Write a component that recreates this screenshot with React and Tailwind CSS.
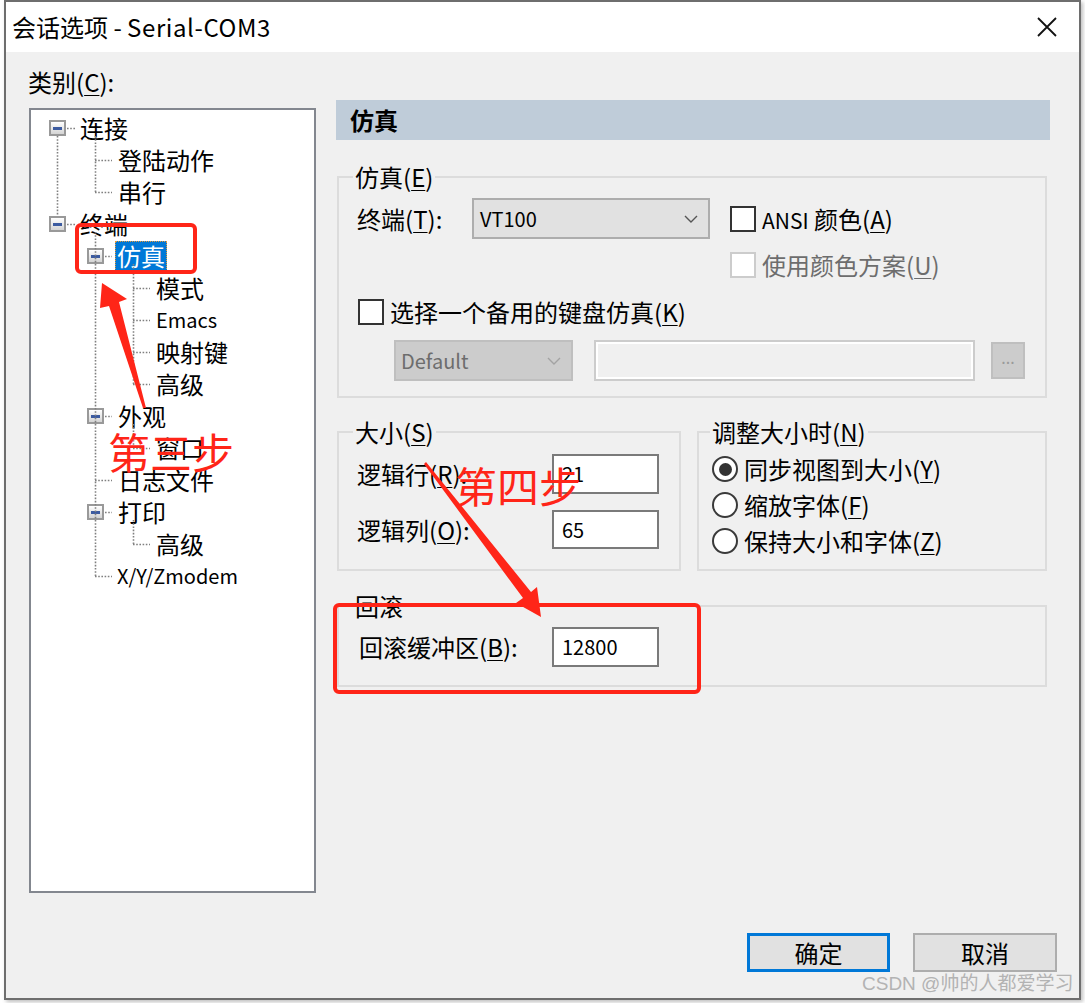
import React from "react";

// access-key letter, underlined like a Win32 label
const Key = ({ children }) => (
  <span className="underline decoration-1 underline-offset-[3px]">{children}</span>
);

const MinusBox = () => (
  <span className="flex h-[16px] w-[17px] shrink-0 items-center justify-center border-2 border-[#999999] bg-linear-to-b from-white to-[#d4d4d4]">
    <span className="h-[3px] w-[9px] bg-[#3c5ba0]" />
  </span>
);

const Check = ({ disabled }) => (
  <span
    className={
      disabled
        ? "block h-[26px] w-[26px] shrink-0 border-2 border-[#cccccc] bg-white"
        : "block h-[26px] w-[26px] shrink-0 border-2 border-[#333333] bg-white"
    }
  />
);

const Radio = ({ checked }) => (
  <span className="flex h-[26px] w-[26px] shrink-0 items-center justify-center rounded-full border-2 border-[#3a3a3a] bg-white">
    {checked && <span className="h-[13px] w-[13px] rounded-full bg-[#333333]" />}
  </span>
);

const Chevron = ({ color }) => (
  <svg width="14" height="8" viewBox="0 0 14 8">
    <path d="M1 1 L7 7 L13 1" fill="none" stroke={color} strokeWidth="1.4" />
  </svg>
);

const TreeRow = ({ pl, box, children }) => (
  <div className="flex h-[32px] items-center" style={{ paddingLeft: pl }}>
    {box && <MinusBox />}
    {children}
  </div>
);

// dotted connectors of the tree, coordinates local to the tree box
const TreeLines = () => {
  const v = [
    [26, 26, 106],
    [64, 26, 82],
    [64, 122, 466],
    [102, 154, 274],
    [102, 314, 338],
    [102, 410, 434],
  ];
  const h = [
    [18, 36, 45],
    [114, 36, 45],
    [50, 64, 81],
    [82, 64, 81],
    [146, 74, 81],
    [306, 74, 81],
    [370, 64, 81],
    [402, 74, 81],
    [466, 64, 81],
    [178, 102, 119],
    [210, 102, 119],
    [242, 102, 119],
    [274, 102, 119],
    [338, 102, 119],
    [434, 102, 119],
  ];
  return (
    <svg className="pointer-events-none absolute left-0 top-0" width="283" height="500">
      {v.map(([x, y1, y2], i) => (
        <line key={"v" + i} x1={x + 0.5} y1={y1} x2={x + 0.5} y2={y2} stroke="#808080" strokeWidth="1.6" strokeDasharray="1.6 1.6" />
      ))}
      {h.map(([y, x1, x2], i) => (
        <line key={"h" + i} x1={x1} y1={y + 0.5} x2={x2} y2={y + 0.5} stroke="#808080" strokeWidth="1.6" strokeDasharray="1.6 1.6" />
      ))}
    </svg>
  );
};

const App = () => {
  return (
    <div className="relative h-[1003px] w-[1085px] overflow-hidden bg-white font-['Noto_Sans_CJK_SC',sans-serif] text-[24px] text-black">
      <div className="ml-[4px] h-[1000px] w-[1077px] border-2 border-[#6e6e6e] shadow-[2px_2px_4px_rgba(0,0,0,0.25)]">
        {/* title bar */}
        <div className="flex h-[50px] items-center justify-between bg-white pl-[6px] pr-[22px]">
          <span className="leading-none">
            会话选项 - <span className="tracking-[0.6px]">Serial-COM3</span>
          </span>
          <svg width="20" height="20" viewBox="0 0 20 20">
            <path d="M1 1 L19 19 M19 1 L1 19" stroke="#111" strokeWidth="1.8" />
          </svg>
        </div>

        <div className="flex h-[946px] flex-col bg-[#f0f0f0]">
          <div className="flex pl-[22px] pt-[18px]">
            {/* category tree */}
            <div className="w-[288px]">
              <div className="h-[24px] leading-[24px]">
                类别(<Key>C</Key>):
              </div>
              <div className="relative ml-[1px] mt-[14px] h-[785px] w-[287px] border-2 border-[#83878f] bg-white pt-[2px]">
                <TreeLines />
                <TreeRow pl={18} box>
                  <span className="ml-[14px]">连接</span>
                </TreeRow>
                <TreeRow pl={87}>登陆动作</TreeRow>
                <TreeRow pl={87}>串行</TreeRow>
                <TreeRow pl={18} box>
                  <span className="ml-[14px]">终端</span>
                </TreeRow>
                <TreeRow pl={56} box>
                  <span className="ml-[11px] border border-dotted border-[#e59a3c] bg-[#0078d7] px-[1px] leading-[28px] text-white">
                    仿真
                  </span>
                </TreeRow>
                <TreeRow pl={125}>模式</TreeRow>
                <TreeRow pl={125}>
                  <span className="text-[20px]">Emacs</span>
                </TreeRow>
                <TreeRow pl={125}>映射键</TreeRow>
                <TreeRow pl={125}>高级</TreeRow>
                <TreeRow pl={56} box>
                  <span className="ml-[14px]">外观</span>
                </TreeRow>
                <TreeRow pl={125}>窗口</TreeRow>
                <TreeRow pl={87}>日志文件</TreeRow>
                <TreeRow pl={56} box>
                  <span className="ml-[14px]">打印</span>
                </TreeRow>
                <TreeRow pl={125}>高级</TreeRow>
                <TreeRow pl={86}>
                  <span className="text-[20px]">X/Y/Zmodem</span>
                </TreeRow>
              </div>
            </div>

            {/* settings page */}
            <div className="ml-[20px] mt-[30px]">
              <div className="flex h-[40px] w-[714px] items-center bg-[#bfccd9] pl-[14px] font-bold">
                仿真
              </div>

              <fieldset className="ml-[1px] mt-[25px] h-[233px] w-[710px] border-2 border-[#dcdcdc] pb-0 pl-[18px] pr-0 pt-0">
                <legend className="ml-[-4px] px-[2px] leading-[24px]">
                  仿真(<Key>E</Key>)
                </legend>
                <div className="mt-[9px] flex h-[41px] items-center">
                  <span className="w-[115px]">
                    终端(<Key>T</Key>):
                  </span>
                  <div className="flex h-[41px] w-[238px] items-center justify-between border-2 border-[#adadad] bg-[#e1e1e1] pl-[6px] pr-[10px]">
                    <span className="text-[20px]">VT100</span>
                    <Chevron color="#555555" />
                  </div>
                  <span className="ml-[20px] flex">
                    <Check />
                  </span>
                  <span className="ml-[6px]">
                    <span className="text-[21px]">ANSI</span> 颜色(<Key>A</Key>)
                  </span>
                </div>
                <div className="mt-[13px] flex h-[26px] items-center pl-[373px]">
                  <Check disabled />
                  <span className="ml-[6px] text-[#6d6d6d]">
                    使用颜色方案(<Key>U</Key>)
                  </span>
                </div>
                <div className="ml-[1px] mt-[21px] flex h-[26px] items-center">
                  <Check />
                  <span className="ml-[6px]">
                    选择一个备用的键盘仿真(<Key>K</Key>)
                  </span>
                </div>
                <div className="ml-[37px] mt-[15px] flex h-[41px] items-center">
                  <div className="flex h-[41px] w-[179px] items-center justify-between border-2 border-[#bfbfbf] bg-[#cccccc] pl-[5px] pr-[10px]">
                    <span className="text-[20px] text-[#6d6d6d]">Default</span>
                    <Chevron color="#a3a3a3" />
                  </div>
                  <div className="ml-[21px] h-[41px] w-[381px] border-2 border-[#cccccc] bg-[#f0f0f0] shadow-[inset_0_0_0_2px_#ffffff]" />
                  <div className="ml-[16px] flex h-[37px] w-[34px] items-center justify-center border-2 border-[#bfbfbf] bg-[#cccccc] pb-[8px] text-[16px] leading-none text-[#9a9a9a]">
                    ...
                  </div>
                </div>
              </fieldset>

              <div className="mt-[22px] flex gap-[16px]">
                <fieldset className="ml-[1px] h-[151px] w-[344px] border-2 border-[#dcdcdc] pb-0 pl-[18px] pr-0 pt-0">
                  <legend className="ml-[-4px] px-[2px] leading-[24px]">
                    大小(<Key>S</Key>)
                  </legend>
                  <div className="mt-[10px] flex h-[40px] items-center">
                    <span className="w-[195px]">
                      逻辑行(<Key>R</Key>):
                    </span>
                    <div className="flex h-[40px] w-[107px] items-center border-2 border-[#7a7a7a] bg-white pl-[8px] text-[20px]">
                      21
                    </div>
                  </div>
                  <div className="mt-[16px] flex h-[39px] items-center">
                    <span className="w-[195px]">
                      逻辑列(<Key>O</Key>):
                    </span>
                    <div className="flex h-[39px] w-[107px] items-center border-2 border-[#7a7a7a] bg-white pl-[8px] text-[20px]">
                      65
                    </div>
                  </div>
                </fieldset>

                <fieldset className="h-[151px] w-[350px] border-2 border-[#dcdcdc] pb-0 pl-[13px] pr-0 pt-0">
                  <legend className="ml-[-2px] px-[2px] leading-[24px]">
                    调整大小时(<Key>N</Key>)
                  </legend>
                  <div className="mt-[7px]">
                    <div className="flex h-[36px] items-center gap-[6px]">
                      <Radio checked />
                      <span>
                        同步视图到大小(<Key>Y</Key>)
                      </span>
                    </div>
                    <div className="flex h-[36px] items-center gap-[6px]">
                      <Radio />
                      <span>
                        缩放字体(<Key>F</Key>)
                      </span>
                    </div>
                    <div className="flex h-[36px] items-center gap-[6px]">
                      <Radio />
                      <span>
                        保持大小和字体(<Key>Z</Key>)
                      </span>
                    </div>
                  </div>
                </fieldset>
              </div>

              <fieldset className="ml-[1px] mt-[23px] h-[93px] w-[710px] border-2 border-[#dcdcdc] pb-0 pl-[20px] pr-0 pt-0">
                <legend className="ml-[-6px] px-[2px] leading-[24px]">回滚</legend>
                <div className="mt-[9px] flex h-[40px] items-center">
                  <span className="w-[193px]">
                    回滚缓冲区(<Key>B</Key>):
                  </span>
                  <div className="flex h-[40px] w-[107px] items-center border-2 border-[#7a7a7a] bg-white pl-[8px] text-[20px]">
                    12800
                  </div>
                </div>
              </fieldset>
            </div>
          </div>

          {/* dialog buttons */}
          <div className="mb-[26px] mt-auto flex justify-end gap-[23px] pr-[22px]">
            <button className="flex h-[39px] w-[143px] items-center justify-center border-[3px] border-[#0078d7] bg-[#e1e1e1]">
              确定
            </button>
            <button className="flex h-[39px] w-[144px] items-center justify-center border-2 border-[#adadad] bg-[#e1e1e1]">
              取消
            </button>
          </div>
        </div>
      </div>

      {/* red annotations drawn over the screenshot */}
      <div className="pointer-events-none absolute left-[75px] top-[223px] h-[51px] w-[122px] rounded-[6px] border-4 border-[#ff2518]" />
      <div className="pointer-events-none absolute left-[333px] top-[603px] h-[91px] w-[368px] rounded-[6px] border-4 border-[#ff2518]" />
      <svg className="pointer-events-none absolute left-0 top-0" width="1085" height="1003">
        <polygon points="102,283 127,299 119,302 146,408 143,408 109,306 100,308" fill="#ff2518" />
        <polygon points="426,462 531,592 537,587 541,617 516,603 523,598 424,464" fill="#ff2518" />
      </svg>
      <div className="pointer-events-none absolute left-[108px] top-[430px] text-[42px] leading-none text-[#ff2518]">
        第三步
      </div>
      <div className="pointer-events-none absolute left-[455px] top-[464px] text-[42px] leading-none text-[#ff2518]">
        第四步
      </div>
      <div className="pointer-events-none absolute left-[862px] top-[974px] font-['Liberation_Sans','Noto_Sans_CJK_SC',sans-serif] text-[19px] leading-none text-[#b3b3b3]">
        CSDN @帅的人都爱学习
      </div>
    </div>
  );
};

export default App;
